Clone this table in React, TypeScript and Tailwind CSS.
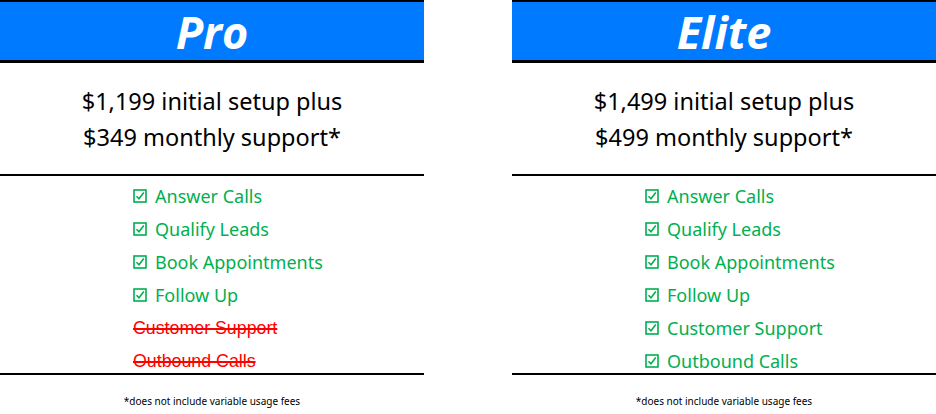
const GREEN = 'text-[#00b050]'

function Check() {
  return (
    <svg width="14" height="14" viewBox="0 0 14 14" className="shrink-0">
      <rect x="1" y="1" width="12" height="12" fill="none" stroke="#00b050" strokeWidth="1.6" />
      <path d="M3.5 7.2 L6 9.8 L10.8 3.6" fill="none" stroke="#00b050" strokeWidth="1.6" />
    </svg>
  )
}

type Feature = { label: string; included: boolean }

const features = ['Answer Calls', 'Qualify Leads', 'Book Appointments', 'Follow Up', 'Customer Support', 'Outbound Calls']

function Card({ title, setup, monthly, included }: { title: string; setup: string; monthly: string; included: number }) {
  const items: Feature[] = features.map((label, i) => ({ label, included: i < included }))
  return (
    <div className="flex w-[424px] flex-col">
      <div className="flex h-[63px] items-center justify-center border-t-2 border-b-[3px] border-black bg-[#007bff]">
        <span className="font-['Open_Sans',sans-serif] text-[45px] font-bold italic leading-none text-white">{title}</span>
      </div>
      <div className="flex h-[111px] flex-col items-center justify-center font-['Noto_Sans',sans-serif] text-[23.5px] leading-[36px] text-black">
        <div>{setup} initial setup plus</div>
        <div>{monthly} monthly support*</div>
      </div>
      <div className="flex h-[201px] flex-col gap-[9px] border-t-2 border-b-2 border-black pt-[8px] pl-[133px]">
        {items.map((f) => (
          <div key={f.label} className="flex h-[24px] items-center">
            {f.included ? (
              <div className={`flex items-center gap-[8px] font-['Noto_Sans',sans-serif] text-[18px] ${GREEN}`}>
                <Check />
                <span>{f.label}</span>
              </div>
            ) : (
              <span className="font-['Liberation_Sans',sans-serif] text-[17.8px] text-[#ff0000] line-through decoration-[1.5px]">
                {f.label}
              </span>
            )}
          </div>
        ))}
      </div>
      <div className="mt-[19px] text-center font-['Noto_Sans',sans-serif] text-[10px] leading-[14px] text-black">
        *does not include variable usage fees
      </div>
    </div>
  )
}

export default function App() {
  return (
    <div className="flex h-[414px] w-[936px] justify-between bg-white">
      <Card title="Pro" setup="$1,199" monthly="$349" included={4} />
      <Card title="Elite" setup="$1,499" monthly="$499" included={6} />
    </div>
  )
}
